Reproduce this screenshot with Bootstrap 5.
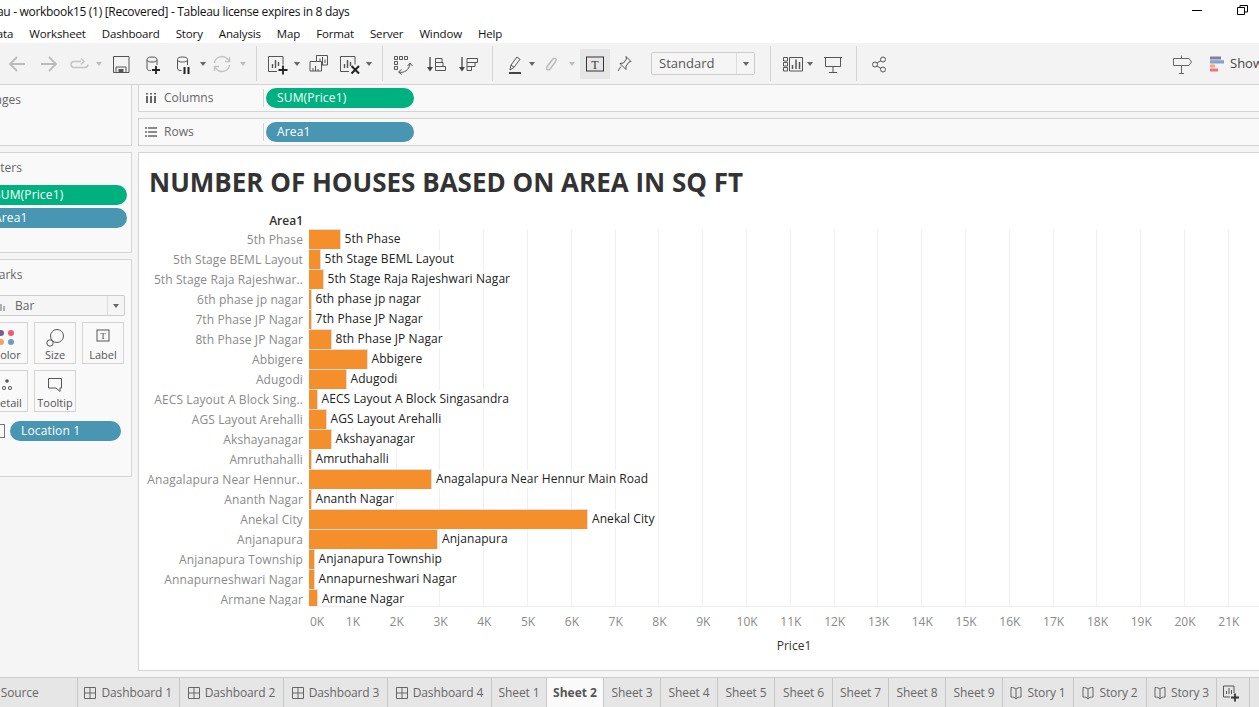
<!DOCTYPE html>
<html lang="en">
  <head>
    <meta charset="UTF-8" />
    <title>Tableau - workbook15 (1) [Recovered]</title>
    <link href="https://cdn.jsdelivr.net/npm/bootstrap@5.3.3/dist/css/bootstrap.min.css" rel="stylesheet" />
    <style>
      html, body { height: 707px; overflow: hidden; background: #f5f5f5; }
      body { font-family: "Open Sans", "Liberation Sans", sans-serif; font-size: 12px; color: #333; }
      /* the window is pushed off the left of the screen, so everything is shifted 42px */
      .tb-app { width: 1420px; height: 707px; margin-left: -42px; overflow: hidden; }
      .tb-title { height: 20px; background: #fff; color: #111; line-height: 24px; font-size: 12px; letter-spacing: -.3px; padding-left: 10px; }
      .tb-winbtn { position: absolute; top: 0; }
      .tb-menu { height: 23px; background: #fff; color: #111; gap: 16px; margin-left: -3px; padding-left: 0; line-height: 28px; font-size: 11.5px; letter-spacing: -.15px; }
      .tb-toolbar { height: 42px; background: #f3f3f3; border-bottom: 1px solid #d4d4d4; }
      .tb-tool { flex: none; height: 41px; }
      .tb-caret { width: 0; height: 0; border-left: 3.5px solid transparent; border-right: 3.5px solid transparent; border-top: 4px solid #666; }
      .tb-caret-off { border-top-color: #bbb; }
      .tb-sep { width: 1px; height: 35px; background: #d4d4d4; }
      .tb-active { width: 30px; height: 30px; background: #e6e6e6; }
      .tb-combo { width: 104px; height: 23px; background: #f5f5f5; border: 1px solid #ccc; border-radius: 2px; font-size: 13px; color: #555; }
      .tb-combo-text { width: 85px; padding-left: 7px; line-height: 21px; }
      .tb-combo-arrow { width: 18px; border-left: 1px solid #ddd; }
      .tb-showme { font-size: 13px; color: #444; margin-left: 6px; white-space: nowrap; }
      .tb-work { gap: 6px; height: 586px; flex: none; }
      .tb-side { width: 174px; flex: none; gap: 6px; }
      .tb-panel { background: #f9f9f9; border: 1px solid #d4d4d4; border-left: 0; position: relative; color: #666; }
      .tb-panel-title { padding: 7px 0 0 30px; line-height: 16px; }
      .tb-pages { height: 61px; border-top: 0; }
      .tb-filters { height: 101px; }
      .tb-marks { height: 218px; }
      .tb-main { flex: 1; gap: 6px; min-width: 0; }
      .tb-shelves { gap: 6px; }
      .tb-shelf { height: 27px; background: #f9f9f9; border: 1px solid #d4d4d4; border-width: 0 0 1px 1px; color: #666; }
      .tb-shelf + .tb-shelf { height: 28px; border-top-width: 1px; }
      .tb-shelf-name { width: 125px; flex: none; border-right: 1px solid #d4d4d4; gap: 7px; padding-left: 6px; }
      .tb-pill { height: 20px; border-radius: 10px; color: #fff; font-weight: 500; line-height: 20px; padding-left: 11px; letter-spacing: .15px; }
      .tb-green { background: #00b180; }
      .tb-blue { background: #4996b2; }
      .tb-shelf .tb-pill { width: 148px; margin-left: 2px; }
      .tb-side-pill { width: 141px; margin: 0 0 3px 28px; padding-left: 8px; }
      .tb-side-pills { padding-top: 9px; }
      .tb-mark-select { width: 167px; height: 21px; margin: 12px 0 6px 0; border: 1px solid #ccc; border-left: 0; background: #f5f5f5; border-radius: 2px; }
      .tb-mark-name { width: 149px; padding-left: 39px; gap: 8px; line-height: 19px; }
      .tb-mark-arrow { flex: 1; border-left: 1px solid #ddd; }
      .tb-mark-grid { display: grid; grid-template-columns: repeat(3, 42px); grid-auto-rows: 42px; gap: 6px; margin-left: 28px; }
      .tb-mark-btn { border: 1px solid #d4d4d4; background: #f9f9f9; font-size: 11px; color: #555; line-height: 14px; padding-top: 3px; }
      .tb-mark-btn svg { display: block; height: 22px; }
      .tb-loc { gap: 5px; margin: 9px 0 0 37px; }
      .tb-loc-box { width: 10px; height: 14px; border: 1px solid #777; background: #f9f9f9; flex: none; }
      .tb-loc .tb-pill { width: 111px; padding-left: 11px; }
      .tb-view { flex: 1; background: #fff; border: 1px solid #d4d4d4; border-right: 0; height: 519px; overflow: hidden; }
      .tb-headline { font-size: 26px; font-weight: 700; color: #333; line-height: 36px; padding: 11px 0 0 10px; white-space: nowrap; height: 59px; }
      .tb-ylabels { width: 165px; flex: none; color: #8a8a8a; text-align: right; padding-right: 1px; letter-spacing: .1px; height: 394px; overflow: hidden; }
      .tb-hdr { color: #333; font-weight: 600; height: 17px; line-height: 17px; letter-spacing: 0; }
      .tb-row { height: 20px; line-height: 22px; white-space: nowrap; }
      .tb-plot { width: 1000px; flex: none; margin-left: 5px; padding-top: 17px; }
      .tb-grid { height: 377.5px; overflow: hidden; border-bottom: 1px solid #eee; background-image: repeating-linear-gradient(to right, transparent 0, transparent 42.8px, #f0f0f0 42.8px, #f0f0f0 43.8px); }
      .tb-bar { height: 100%; background: #f58f2c; border: 1px solid #ddd; border-width: 1px 1px 0 0; flex: none; }
      .tb-datalabel { margin: 1px 0 0 3px; padding: 0 1px; color: #222; background: #fff; line-height: 18px; height: 18px; letter-spacing: .08px; }
      .tb-axis { height: 29px; color: #8a8a8a; line-height: 29px; text-align: center; }
      .tb-axis span { width: 43.8px; flex: none; }
      .tb-axis span:first-child { width: 22px; text-align: left; padding-left: 1px; }
      .tb-axis-name { color: #333; font-weight: 500; width: 970px; text-align: center; line-height: 20px; }
      .tb-tabs { height: 30px; flex: none; background: #e6e6e6; border-top: 1px solid #ccc; margin-top: 6px; color: #666; letter-spacing: -.12px; }
      .tb-tab { flex: none; height: 29px; border-right: 1px solid #c8c8c8; gap: 5px; white-space: nowrap; }
      .tb-tab-on { background: #fafafa; font-weight: 700; color: #555; letter-spacing: 0; }
      .tb-tab-src { padding-right: 24px; }
      svg { flex: none; }
    </style>
  </head>
  <body>
    <div class="tb-app d-flex flex-column position-relative">
      <div class="tb-title">Tableau - workbook15 (1) [Recovered] - Tableau license expires in 8 days</div>
      <svg class="tb-winbtn" style="left:1234px" width="10" height="20" viewBox="0 0 10 20"><path d="M0 10.5h10" stroke="#000"/></svg>
      <svg class="tb-winbtn" style="left:1279px" width="12" height="20" viewBox="0 0 12 20"><path d="M.5 7.5h7v7h-7zM3 7V5.500h7.500V12H8" fill="none" stroke="#000"/></svg>
      <div class="tb-menu d-flex">
        <span>File</span><span>Data</span><span>Worksheet</span><span>Dashboard</span><span>Story</span><span>Analysis</span><span>Map</span><span>Format</span><span>Server</span><span>Window</span><span>Help</span>
      </div>
      <div class="tb-toolbar d-flex align-items-center" id="toolbar"></div>
      <div class="tb-work d-flex">
        <div class="tb-side d-flex flex-column">
          <div class="tb-panel tb-pages"><div class="tb-panel-title">Pages</div></div>
          <div class="tb-panel tb-filters">
            <div class="tb-panel-title">Filters</div>
            <div class="tb-side-pills">
              <div class="tb-pill tb-green tb-side-pill">SUM(Price1)</div>
              <div class="tb-pill tb-blue tb-side-pill">Area1</div>
            </div>
          </div>
          <div class="tb-panel tb-marks">
            <div class="tb-panel-title">Marks</div>
            <div class="tb-mark-select d-flex">
              <div class="tb-mark-name d-flex align-items-center">
                <svg width="10" height="12" viewBox="0 0 10 12"><path d="M1 7v4M4 4v7M7 6v5" stroke="#999" stroke-width="1.500"/></svg>
                <span>Bar</span>
              </div>
              <div class="tb-mark-arrow d-flex align-items-center justify-content-center"><div class="tb-caret"></div></div>
            </div>
            <div class="tb-mark-grid">
              <div class="tb-mark-btn text-center">
                <svg class="w-100" viewBox="0 0 40 22"><circle cx="14" cy="7" r="3" fill="#7a5f96"/><circle cx="24" cy="7" r="3" fill="#f15b6c"/><circle cx="14" cy="16" r="3" fill="#f4a261"/><circle cx="24" cy="16" r="3" fill="#6d9bc8"/></svg>Color
              </div>
              <div class="tb-mark-btn text-center">
                <svg class="w-100" viewBox="0 0 40 22"><circle cx="22" cy="10" r="6.500" fill="#f9f9f9" stroke="#555"/><circle cx="15" cy="17" r="3.200" fill="#f9f9f9" stroke="#555"/></svg>Size
              </div>
              <div class="tb-mark-btn text-center">
                <svg class="w-100" viewBox="0 0 40 22"><rect x="14" y="4" width="12" height="11" fill="none" stroke="#555"/><text x="20" y="13" font-size="9" font-family="Liberation Serif" text-anchor="middle" fill="#444">T</text></svg>Label
              </div>
              <div class="tb-mark-btn text-center">
                <svg class="w-100" viewBox="0 0 40 22"><circle cx="20" cy="7" r="1.800" fill="#555"/><circle cx="11" cy="14" r="1.600" fill="none" stroke="#555"/><circle cx="17" cy="14" r="1.600" fill="none" stroke="#555"/><circle cx="23" cy="14" r="1.600" fill="none" stroke="#555"/></svg>Detail
              </div>
              <div class="tb-mark-btn text-center">
                <svg class="w-100" viewBox="0 0 40 22"><path d="M13.500 4.500h13v9.500H25v3.500L21 14h-7.500z" fill="none" stroke="#555"/></svg>Tooltip
              </div>
            </div>
            <div class="tb-loc d-flex align-items-center">
              <div class="tb-loc-box"></div>
              <div class="tb-pill tb-blue">Location 1</div>
            </div>
          </div>
        </div>
        <div class="tb-main d-flex flex-column">
          <div class="tb-shelves d-flex flex-column">
            <div class="tb-shelf d-flex align-items-center">
              <div class="tb-shelf-name d-flex align-items-center">
                <svg width="12" height="12" viewBox="0 0 12 12"><path d="M2 4v7M6 4v7M10 4v7" stroke="#666" stroke-width="2"/><path d="M2 1v2M6 1v2M10 1v2" stroke="#666" stroke-width="2" stroke-dasharray="1.500 .500"/></svg>
                <span>Columns</span>
              </div>
              <div class="tb-pill tb-green">SUM(Price1)</div>
            </div>
            <div class="tb-shelf d-flex align-items-center">
              <div class="tb-shelf-name d-flex align-items-center">
                <svg width="12" height="12" viewBox="0 0 12 12"><path d="M3 2h9M3 6h9M3 10h9M0 2h2M0 6h2M0 10h2" stroke="#666" stroke-width="1.500"/></svg>
                <span>Rows</span>
              </div>
              <div class="tb-pill tb-blue">Area1</div>
            </div>
          </div>
          <div class="tb-view">
            <div class="tb-headline">NUMBER OF HOUSES BASED ON AREA IN SQ FT</div>
            <div class="d-flex">
              <div class="tb-ylabels" id="ylabels"><div class="tb-hdr">Area1</div></div>
              <div class="tb-plot">
                <div class="tb-grid" id="plot"></div>
                <div class="tb-axis d-flex" id="axis"></div>
                <div class="tb-axis-name">Price1</div>
              </div>
            </div>
          </div>
        </div>
      </div>
      <div class="tb-tabs d-flex" id="tabs"></div>
    </div>

    <script>
      // stroke colours used by the toolbar icons
      const dark = 'fill="none" stroke="#555" stroke-width="1"';
      const off = 'fill="none" stroke="#c4c4c4" stroke-width="1.500"';
      const can = '<path d="M7 8v8c0 1.500 1 2.500 2.500 2.500H11M17 8v5" ' + dark + '/><ellipse cx="12" cy="7.500" rx="5" ry="2.500" ' + dark + '/>';
      const sheet = '<path d="M18 12.500v-8H3.500v15H12" ' + dark + '/><path d="M7.500 16v-4M10.500 16V8M13.500 14v-4" stroke="#555" stroke-width="1.400"/>';
      const sortArrow = '<path d="M6 5v11" stroke="#444" stroke-width="1.300"/><path d="M3 15h6l-3 4.500z" fill="#444"/>';
      const icons = {
        back: '<path d="M20 12H5M12 5l-7 7 7 7" fill="none" stroke="#bbb" stroke-width="1.800"/>',
        fwd: '<path d="M4 12h15M12 5l7 7-7 7" fill="none" stroke="#bbb" stroke-width="1.800"/>',
        redo: '<path d="M13 9.500H6a3 3 0 0 0 0 6h11a3 3 0 0 0 3-3" ' + off + '/><path d="M13 6.500l3 3-3 3" ' + off + '/>',
        save: '<path d="M4.500 4.500h15.500v16H4.500z" ' + dark + '/><path d="M7 20v-5h10v5" ' + dark + '/><path d="M9.500 17h5v3h-5z" fill="#555"/>',
        dsnew: can + '<path d="M12 18h8M16 14v8" stroke="#222" stroke-width="1.800"/>',
        dspause: '<g transform="translate(-1.500 0)">' + can + '</g><path d="M12.500 15v7M16.500 15v7" stroke="#222" stroke-width="2"/>',
        refresh: '<path d="M4.500 11a7.500 7.500 0 0 1 13-4l2 2M19.500 13a7.500 7.500 0 0 1-13 4l-2-2" ' + off + '/><path d="M19.500 5v4.500H15M4.500 19v-4.500H9" ' + off + '/>',
        shnew: sheet + '<path d="M13.500 18h9M18 13.500v9" stroke="#222" stroke-width="1.800"/>',
        dup: '<path d="M10.500 9V3.500h11V13H16" ' + dark + '/><path d="M4 9.500h11.500V19H4z" fill="#f3f3f3" stroke="#555"/><path d="M7 19v-3M9.500 19v-5M12 19v-2M14 9V6.500M16.500 13V5M19 11V7.500" stroke="#555"/>',
        shclear: sheet + '<path d="M14.500 14l7.500 7.500M22 14l-7.500 7.500" stroke="#222" stroke-width="2"/>',
        swap: '<path d="M3.500 4.500h3v3h-3zM8.500 4.500h3v3h-3zM13.500 4.500h3v3h-3zM3.500 9.500h3v3h-3zM3.500 14.500h3v3h-3z" fill="none" stroke="#555"/><path d="M8 20c5 1.500 10-2 11-8M16.500 14l2.500-3 2.500 3M10.500 17.500L7.500 20l3 2.500" ' + dark + '/>',
        sortasc: sortArrow + '<path d="M11.500 6.500H18V10.500H11.500zM11.500 10.500H19V14.500H11.500zM11.500 14.500H21.500V18.500H11.500z" ' + dark + '/>',
        sortdesc: sortArrow + '<path d="M11 6.500H21.500V10.500H11zM11 10.500H19V14.500H11zM11 14.500H15.500V18.500H11z" ' + dark + '/>',
        pen: '<path d="M7 18l1-5 6-8 3 2.300-6 8z" ' + dark + '/><path d="M8 13l3 2.300" ' + dark + '/><path d="M6 21h12" stroke="#444" stroke-width="2"/>',
        clip: '<path d="M9 12l4-5c1.500-1.500 4 0 3 2l-6 8c-1.500 2-4.500 .5-3-2l5-7" fill="none" stroke="#bbb" stroke-width="1.500"/>',
        pin: '<path d="M14 4.500l5 5-2 .5-3 4 0 3.500-6-6 3.500-.5 3-4z" ' + dark + '/><path d="M9 14.500l-3 4.500" ' + dark + '/>',
        showbars: '<path d="M2.500 5.500h4v3.500h-4zM2.500 10.500h4v3.500h-4zM2.500 15.500h4V19h-4zM8.500 5.500h13v13.500h-13z" fill="none" stroke="#555"/><path d="M11.500 17v-4M15 17V7.500M18.500 17v-7" stroke="#555" stroke-width="1.500"/>',
        present: '<path d="M4.500 5.500h15v9h-15zM3 5.500h18M12 14.500V20M8 20.500h8" fill="none" stroke="#555"/>',
        share: '<circle cx="8" cy="12.500" r="2.500" ' + dark + '/><circle cx="16" cy="7.500" r="2.500" ' + dark + '/><circle cx="16" cy="17.500" r="2.500" ' + dark + '/><path d="M10 11l4-2.500M10 14l4 2.500" ' + dark + '/>',
        sign: '<path d="M3.500 6.500h15.500l2.500 3.500-2.500 3.500h-15.500zM11.500 3.500v3M11.500 13.500V21M9 21.500h5" fill="none" stroke="#666"/>',
        bars: '<rect x="0" y="4.500" width="11" height="3" fill="#8b7aa3"/><rect x="0" y="8.200" width="14" height="3.300" fill="#7fa6cd"/><rect x="0" y="12.500" width="5" height="3" fill="#f5a56d"/><rect x="0" y="16.500" width="8" height="3" fill="#f5707d"/>',
      };

      // toolbar items: [kind, centre x on screen]
      const tools = [
        ["back", 17], ["fwd", 49], ["redo", 80], ["caret-off", 99], ["save", 121], ["dsnew", 152], ["dspause", 184], ["caret", 203],
        ["refresh", 222], ["caret-off", 243], ["sep", 256], ["shnew", 277], ["caret", 297], ["dup", 318], ["shclear", 349], ["caret", 369],
        ["sep", 382], ["swap", 403], ["sortasc", 436], ["sortdesc", 468], ["sep", 492], ["pen", 515], ["caret", 532], ["clip", 552],
        ["caret-off", 572], ["text", 595], ["pin", 624], ["combo", 703], ["sep", 770], ["showbars", 793], ["caret", 810], ["present", 832.5],
        ["sep", 856], ["share", 879], ["sign", 1182], ["bars", 1218],
      ];
      let toolHtml = "";
      let cursor = -42;
      for (const [kind, x] of tools) {
        let w = 24;
        let inner;
        if (kind === "sep") {
          w = 1;
          inner = '<div class="tb-sep"></div>';
        } else if (kind === "caret" || kind === "caret-off") {
          w = 7;
          inner = `<div class="tb-caret ${kind === "caret-off" ? "tb-caret-off" : ""}"></div>`;
        } else if (kind === "text") {
          w = 30;
          inner = '<div class="tb-active d-flex align-items-center justify-content-center"><svg width="18" height="16" viewBox="0 0 18 16"><rect x=".5" y="1" width="17" height="14" fill="none" stroke="#333"/><text x="9" y="12.500" font-size="12" font-family="Liberation Serif" text-anchor="middle" fill="#333">T</text></svg></div>';
        } else if (kind === "combo") {
          w = 104;
          inner = '<div class="tb-combo d-flex"><div class="tb-combo-text">Standard</div><div class="tb-combo-arrow d-flex align-items-center justify-content-center"><div class="tb-caret"></div></div></div>';
        } else if (kind === "bars") {
          w = 16;
          inner = `<svg width="14" height="24" viewBox="0 0 14 24">${icons[kind]}</svg><span class="tb-showme">Show Me</span>`;
        } else {
          inner = `<svg width="24" height="24" viewBox="0 0 24 24">${icons[kind]}</svg>`;
        }
        const left = x - w / 2 - cursor;
        toolHtml += `<div class="tb-tool d-flex align-items-center" style="margin-left:${left}px;width:${w}px">${inner}</div>`;
        cursor = x + w / 2;
      }
      document.getElementById("toolbar").innerHTML = toolHtml;

      // chart data: label on the axis, full name, right edge of the bar on screen
      const rows = [
        ["5th Phase", "5th Phase", 340.5],
        ["5th Stage BEML Layout", "5th Stage BEML Layout", 320.5],
        ["5th Stage Raja Rajeshwar..", "5th Stage Raja Rajeshwari Nagar", 323.5],
        ["6th phase jp nagar", "6th phase jp nagar", 311.5],
        ["7th Phase JP Nagar", "7th Phase JP Nagar", 311.5],
        ["8th Phase JP Nagar", "8th Phase JP Nagar", 331.5],
        ["Abbigere", "Abbigere", 367.5],
        ["Adugodi", "Adugodi", 346.5],
        ["AECS Layout A Block Sing..", "AECS Layout A Block Singasandra", 317.5],
        ["AGS Layout Arehalli", "AGS Layout Arehalli", 326.5],
        ["Akshayanagar", "Akshayanagar", 331.5],
        ["Amruthahalli", "Amruthahalli", 311.5],
        ["Anagalapura Near Hennur..", "Anagalapura Near Hennur Main Road", 432],
        ["Ananth Nagar", "Ananth Nagar", 311.5],
        ["Anekal City", "Anekal City", 588],
        ["Anjanapura", "Anjanapura", 438],
        ["Anjanapura Township", "Anjanapura Township", 314.5],
        ["Annapurneshwari Nagar", "Annapurneshwari Nagar", 314.5],
        ["Armane Nagar", "Armane Nagar", 318],
      ];
      let ylabelHtml = "";
      let plotHtml = "";
      for (const [label, name, edge] of rows) {
        ylabelHtml += `<div class="tb-row">${label}</div>`;
        plotHtml += `<div class="tb-row d-flex"><div class="tb-bar" style="width:${edge - 309}px"></div><div class="tb-datalabel">${name}</div></div>`;
      }
      document.getElementById("ylabels").innerHTML += ylabelHtml;
      document.getElementById("plot").innerHTML = plotHtml;

      let axisHtml = "";
      for (let k = 0; k <= 22; k++) {
        axisHtml += `<span>${k}K</span>`;
      }
      document.getElementById("axis").innerHTML = axisHtml;

      // tabs: [icon, name, right edge on screen]
      const grid4 = '<svg width="12" height="12" viewBox="0 0 12 12"><path d="M.5.500h11v11H.5zM6 .5v11M.5 6h11" fill="none" stroke="#666"/></svg>';
      const book = '<svg width="12" height="14" viewBox="0 0 12 14"><path d="M6 3C5 2 3 1.500 1 1.500v9.500c2 0 4 .5 5 2 1-1.500 3-2 5-2V1.500C9 1.500 7 2 6 3zM6 3v10" fill="none" stroke="#666"/></svg>';
      const newsheet = '<svg width="18" height="18" viewBox="0 0 18 18"><path d="M12 9V2H1.500v11H8" fill="none" stroke="#555"/><path d="M4.500 10V7M7 10V4M9.500 10V6" stroke="#555"/><path d="M9 13.500h8M13 9.500v8" stroke="#333" stroke-width="1.800"/></svg>';
      const tabs = [
        ["", "Data Source", 77.5], [grid4, "Dashboard 1", 180], [grid4, "Dashboard 2", 284], [grid4, "Dashboard 3", 388], [grid4, "Dashboard 4", 492],
        ["", "Sheet 1", 547], ["", "Sheet 2", 604], ["", "Sheet 3", 661], ["", "Sheet 4", 718], ["", "Sheet 5", 775], ["", "Sheet 6", 833],
        ["", "Sheet 7", 889], ["", "Sheet 8", 946], ["", "Sheet 9", 1003], [book, "Story 1", 1074], [book, "Story 2", 1147], [book, "Story 3", 1217],
        [newsheet, "", 1250],
      ];
      let tabHtml = "";
      let prev = -42;
      for (const [icon, name, edge] of tabs) {
        let extra = name === "Sheet 2" ? "tb-tab-on" : "";
        if (name === "Data Source") extra = "tb-tab-src";
        tabHtml += `<div class="tb-tab d-flex align-items-center justify-content-center ${extra}" style="width:${edge - prev}px">${icon}<span>${name}</span></div>`;
        prev = edge;
      }
      document.getElementById("tabs").innerHTML = tabHtml;
    </script>
    <script src="https://cdn.jsdelivr.net/npm/bootstrap@5.3.3/dist/js/bootstrap.bundle.min.js"></script>
  </body>
</html>
